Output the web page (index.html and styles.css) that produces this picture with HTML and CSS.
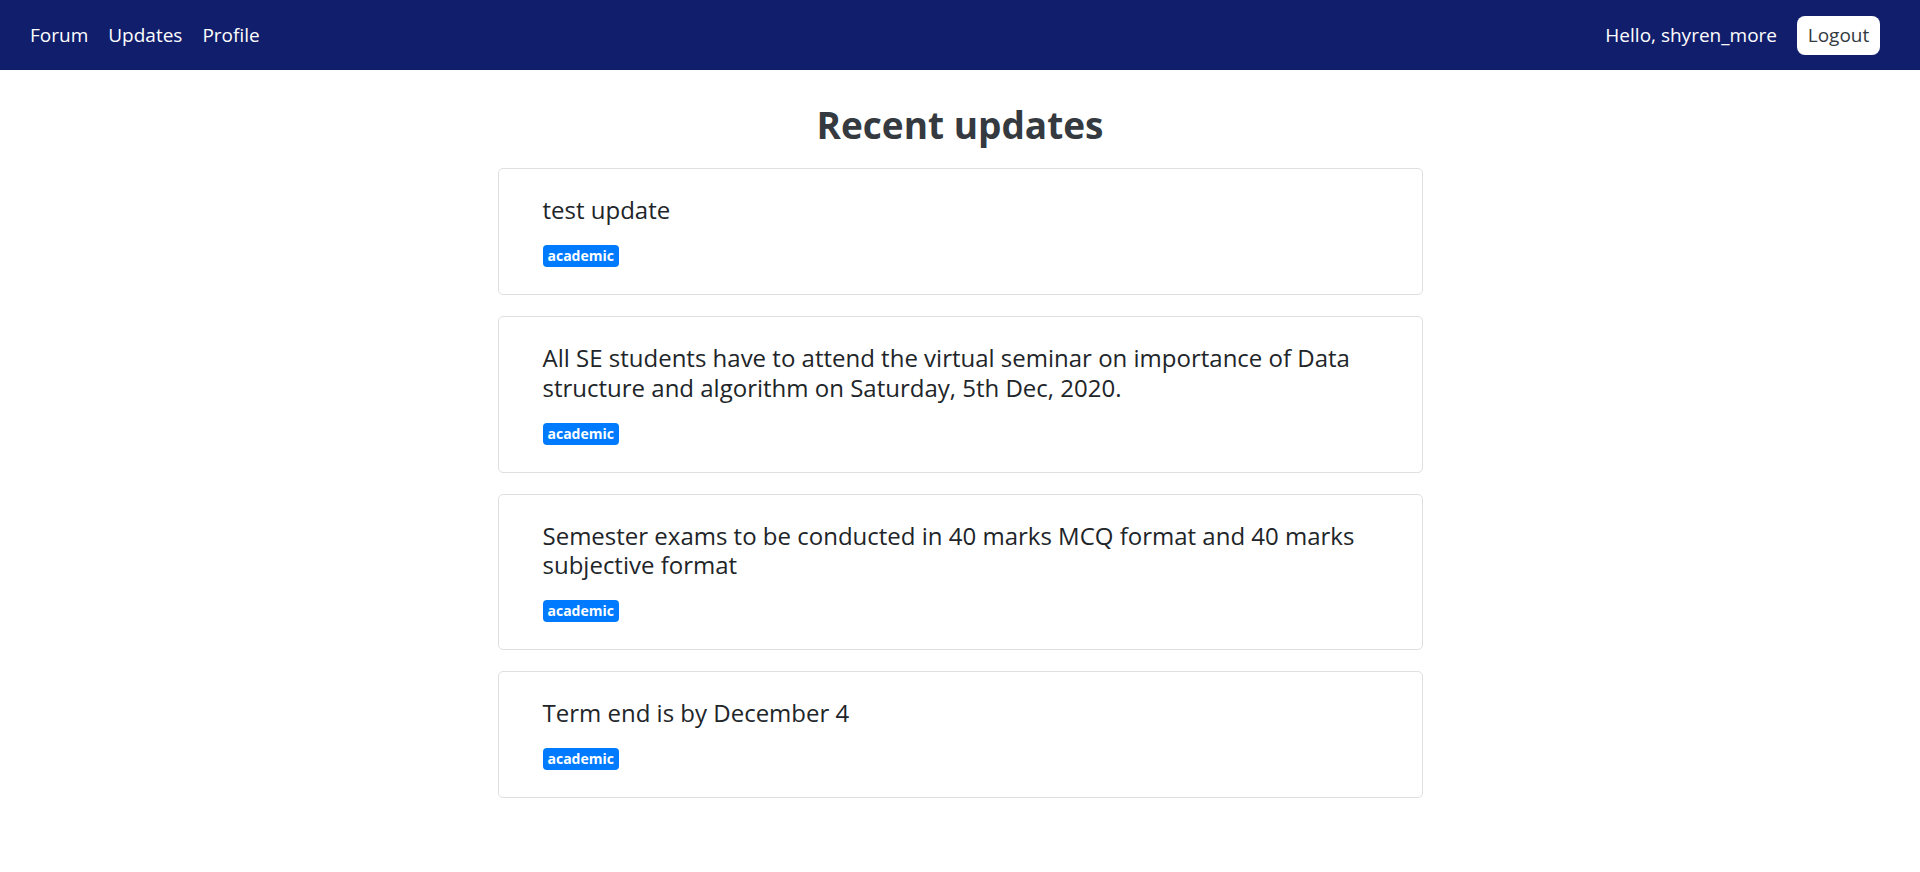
FILE: index.html
```html
<!DOCTYPE html>
<html>
<head>
<meta charset="utf-8">
<link rel="stylesheet" href="styles.css">
</head>
<body>
<nav class="navbar">
  <div class="nav-left">
    <a class="nav-link" href="#">Forum</a>
    <a class="nav-link" href="#">Updates</a>
    <a class="nav-link" href="#">Profile</a>
  </div>
  <div class="nav-right">
    <span class="hello">Hello, shyren_more</span>
    <button class="logout">Logout</button>
  </div>
</nav>
<main class="container">
  <h1 class="page-title">Recent updates</h1>
  <div class="card">
    <h5 class="card-title">test update</h5>
    <span class="badge">academic</span>
  </div>
  <div class="card">
    <h5 class="card-title">All SE students have to attend the virtual seminar on importance of Data structure and algorithm on Saturday, 5th Dec, 2020.</h5>
    <span class="badge">academic</span>
  </div>
  <div class="card">
    <h5 class="card-title">Semester exams to be conducted in 40 marks MCQ format and 40 marks subjective format</h5>
    <span class="badge">academic</span>
  </div>
  <div class="card">
    <h5 class="card-title">Term end is by December 4</h5>
    <span class="badge">academic</span>
  </div>
</main>
</body>
</html>
```
FILE: styles.css
```css
* { box-sizing: border-box; }
body {
  margin: 0;
  font-family: "Open Sans", "Noto Sans", sans-serif;
  color: #212529;
  background: #fff;
}
.navbar {
  height: 70px;
  background: #111e6c;
  display: flex;
  align-items: center;
  justify-content: space-between;
  padding: 0 40px 0 20px;
}
.nav-left { display: flex; }
.nav-link {
  color: #fff;
  text-decoration: none;
  font-size: 19px;
  padding: 0 10px;
}
.nav-right { display: flex; align-items: center; gap: 20px; }
.hello { color: #fff; font-size: 19px; }
.logout {
  background: #fff;
  border: none;
  border-radius: 8px;
  color: #343a40;
  font-family: inherit;
  font-size: 19px;
  height: 39px;
  width: 83px;
  padding: 0;
}
.container {
  width: 925px;
  margin: 0 auto;
  display: flex;
  flex-direction: column;
  gap: 21px;
}
.page-title {
  text-align: center;
  font-size: 37px;
  font-weight: 700;
  color: #343a40;
  margin: 33px 0 0;
  line-height: 1.2;
}
.card {
  border: 1px solid #dfdfdf;
  border-radius: 5px;
  padding: 26px 44px 27px;
  display: flex;
  flex-direction: column;
  align-items: flex-start;
}
.card-title {
  font-size: 24px;
  font-weight: 400;
  line-height: 29.5px;
  margin: 0 0 20.5px;
}
.badge {
  background: #007bff;
  color: #fff;
  font-weight: 700;
  font-size: 14px;
  line-height: 22px;
  height: 22px;
  padding: 0 5px;
  border-radius: 4px;
}
```
